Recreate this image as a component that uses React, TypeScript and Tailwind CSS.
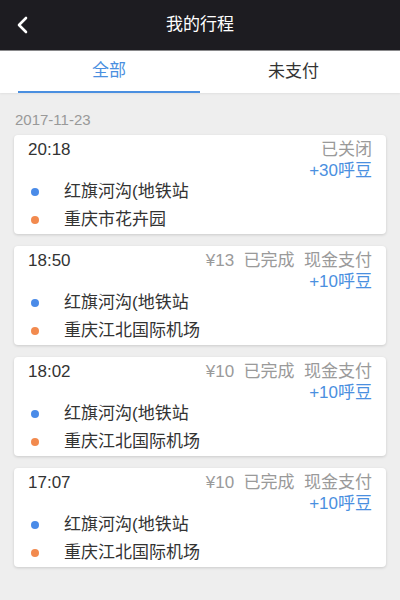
import React from 'react';

type Trip = { time: string; status: string; beans: string; from: string; to: string };

const trips: Trip[] = [
  { time: '20:18', status: '已关闭', beans: '+30呼豆', from: '红旗河沟(地铁站', to: '重庆市花卉园' },
  { time: '18:50', status: '¥13  已完成  现金支付', beans: '+10呼豆', from: '红旗河沟(地铁站', to: '重庆江北国际机场' },
  { time: '18:02', status: '¥10  已完成  现金支付', beans: '+10呼豆', from: '红旗河沟(地铁站', to: '重庆江北国际机场' },
  { time: '17:07', status: '¥10  已完成  现金支付', beans: '+10呼豆', from: '红旗河沟(地铁站', to: '重庆江北国际机场' },
];

const font = { fontFamily: '"Liberation Sans", "Noto Sans CJK SC", sans-serif' };

function TripCard({ trip }: { trip: Trip }) {
  return (
    <div className="mx-[14px] h-[99px] rounded-[4px] bg-white pl-[14px] pr-[14px] pt-[5px] shadow-[0_1px_3px_rgba(0,0,0,0.15)]">
      <div className="flex h-[20px] items-center justify-between leading-[20px]">
        <span className="text-[17px] text-[#333]">{trip.time}</span>
        <span className="whitespace-pre text-[17px] text-[#9a9a9a]">{trip.status}</span>
      </div>
      <div className="flex h-[22px] items-center justify-end text-[17px] text-[#4a8fe0]">{trip.beans}</div>
      <div className="flex h-[20px] items-center text-[17px] text-[#333]">
        <span className="ml-[3px] h-[8px] w-[8px] rounded-full bg-[#4a8be8]" />
        <span className="ml-[25px]">{trip.from}</span>
      </div>
      <div className="mt-[4px] flex h-[28px] items-center text-[17px] text-[#333]">
        <span className="ml-[3px] h-[8px] w-[8px] rounded-full bg-[#f28a4e]" />
        <span className="ml-[25px]">{trip.to}</span>
      </div>
    </div>
  );
}

export default function App() {
  return (
    <div className="h-[600px] w-[400px] overflow-hidden bg-[#eeeeee]" style={font}>
      <div className="relative flex h-[50px] items-center justify-center bg-[#1d1c21]">
        <svg className="absolute left-[15px] top-[16px]" width="14" height="18" viewBox="0 0 14 18">
          <polyline points="11,2 4,9 11,16" fill="none" stroke="#fff" strokeWidth="2.6" strokeLinecap="round" strokeLinejoin="round" />
        </svg>
        <span className="text-[17px] text-white">我的行程</span>
      </div>
      <div className="h-px bg-[#8a8a8c]" />
      <div className="flex h-[42px] bg-white shadow-[0_1px_2px_rgba(0,0,0,0.06)]">
        <div className="ml-[18px] flex w-[182px] items-center justify-center border-b-2 border-[#4a8fe0] text-[17px] text-[#4a8fe0]">全部</div>
        <div className="flex flex-1 items-center justify-center pr-[13px] text-[17px] text-[#333]">未支付</div>
      </div>
      <div className="px-[15px] pt-[17px] text-[15px] leading-[20px] text-[#999]">2017-11-23</div>
      <div className="mt-[5px] flex flex-col gap-[12px]">
        {trips.map((t) => (
          <TripCard key={t.time} trip={t} />
        ))}
      </div>
    </div>
  );
}
